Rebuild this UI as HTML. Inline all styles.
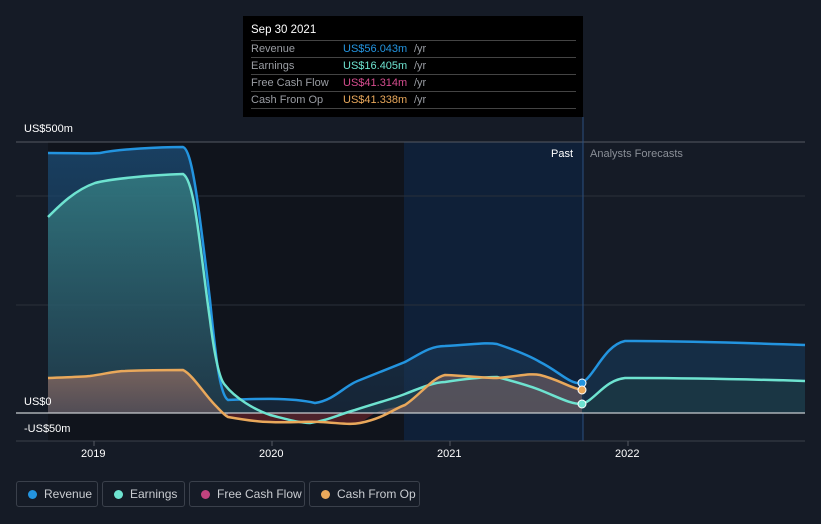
<!DOCTYPE html><html><head><style>
body{margin:0;width:821px;height:524px;background:#151b26;font-family:"Liberation Sans",sans-serif;overflow:hidden;position:relative}
.t{position:absolute;font-size:11px;color:#fff}
.leg{position:absolute;top:481px;height:26px;border:1px solid #3a404b;border-radius:3px;box-sizing:border-box;color:#c9ccd1;font-size:12px;line-height:24px;padding-left:27px}
.leg i{position:absolute;left:11px;top:8px;width:9px;height:9px;border-radius:50%}
.tip{position:absolute;left:243px;top:16px;width:340px;height:101px;background:#000}
.row{position:absolute;left:8px;width:325px;border-top:1px solid #444;font-size:11px;color:#9a9da3;height:17px;line-height:17px}
.row b{font-weight:normal;position:absolute;left:92px}
.row s{text-decoration:none;position:absolute;left:163px;color:#9a9da3}
</style></head><body>
<svg width="821" height="524" style="position:absolute;left:0;top:0">
<defs>
<linearGradient id="gr" x1="0" y1="0" x2="0" y2="1"><stop offset="0" stop-color="#1b4a72" stop-opacity=".8"/><stop offset="1" stop-color="#1b3550" stop-opacity=".5"/></linearGradient>
<linearGradient id="ge" x1="0" y1="0" x2="0" y2="1"><stop offset="0" stop-color="#3a8a8a" stop-opacity=".7"/><stop offset="1" stop-color="#234050" stop-opacity=".6"/></linearGradient>
<linearGradient id="gc" x1="0" y1="0" x2="0" y2="1"><stop offset="0" stop-color="#8a6a60" stop-opacity=".8"/><stop offset="1" stop-color="#5a5058" stop-opacity=".8"/></linearGradient>
</defs>
<rect x="48" y="142" width="356" height="299" fill="#10141c"/>
<rect x="404" y="142" width="179" height="299" fill="#0f2038"/>
<g stroke="#2a303a" stroke-width="1"><line x1="16" y1="196" x2="805" y2="196"/><line x1="16" y1="305" x2="805" y2="305"/></g>
<line x1="16" y1="142" x2="805" y2="142" stroke="#555a63"/>
<line x1="583" y1="117" x2="583" y2="441" stroke="#2b4f80"/>
<path d="M48,153 C80,153 90,154 100,153 C120,149 160,147 183,147 C192,150 198,200 210,300 C216,360 220,395 228,400 C250,399 290,397 315,403 C335,400 345,385 360,380 C380,372 395,366 405,362 C420,354 430,346 445,346 C470,345 485,342 497,344 C515,350 530,356 540,362 C560,372 570,385 582,383 L582,413 L48,413Z" fill="url(#gr)"/>
<path d="M48,217 C60,205 75,190 95,183 C110,179 150,175 183,174 C195,180 200,250 210,320 C215,360 220,380 225,385 C235,398 255,410 270,415 C290,420 300,423 310,423 C330,420 340,414 355,410 C380,402 395,398 405,394 C420,388 435,382 445,382 C470,378 485,377 497,377 C520,383 535,388 540,390 C560,398 570,404 582,404 L582,413 L48,413Z" fill="url(#ge)"/>
<path d="M48,378 C70,377 80,377 90,376 C105,374 115,371 125,371 C150,370 170,370 183,370 C192,374 205,395 215,405 C220,410 224,415 228,417 L228,413 L48,413Z" fill="url(#gc)"/>
<path d="M228,413 L228,417 C245,420 260,422 270,422 C290,423 310,421 320,422 C340,423 350,425 360,423 L375,413Z" fill="#5a2028" opacity=".8"/>
<path d="M375,413 C385,408 395,408 405,405 C420,395 432,378 445,375 C470,376 485,378 497,378 C520,376 530,373 540,375 C560,380 570,388 582,390 L582,413Z" fill="#6a5a60" opacity=".7"/>
<path d="M582,383 C595,375 605,345 625,341 C660,341 720,342 805,345 L805,413 L582,413Z" fill="#15324d" opacity=".8"/>
<path d="M582,404 C595,400 605,380 625,378 C680,378 740,379 805,381 L805,413 L582,413Z" fill="#1c3a44" opacity=".7"/>
<line x1="16" y1="413" x2="805" y2="413" stroke="#c8ccd0" stroke-width="1.2"/>
<line x1="16" y1="441" x2="805" y2="441" stroke="#3a404b"/>
<g stroke="#555a63"><line x1="94" y1="441" x2="94" y2="446"/><line x1="272" y1="441" x2="272" y2="446"/><line x1="450" y1="441" x2="450" y2="446"/><line x1="628" y1="441" x2="628" y2="446"/></g>
<g fill="none" stroke-width="2.5">
<path d="M48,153 C80,153 90,154 100,153 C120,149 160,147 183,147 C192,150 198,200 210,300 C216,360 220,395 228,400 C250,399 290,397 315,403 C335,400 345,385 360,380 C380,372 395,366 405,362 C420,354 430,346 445,346 C470,345 485,342 497,344 C515,350 530,356 540,362 C560,372 570,385 582,383 C595,375 605,345 625,341 C660,341 720,342 805,345" stroke="#2394df"/>
<path d="M48,217 C60,205 75,190 95,183 C110,179 150,175 183,174 C195,180 200,250 210,320 C215,360 220,380 225,385 C235,398 255,410 270,415 C290,420 300,423 310,423 C330,420 340,414 355,410 C380,402 395,398 405,394 C420,388 435,382 445,382 C470,378 485,377 497,377 C520,383 535,388 540,390 C560,398 570,404 582,404 C595,400 605,380 625,378 C680,378 740,379 805,381" stroke="#6ee3d0"/>
<path d="M48,378 C70,377 80,377 90,376 C105,374 115,371 125,371 C150,370 170,370 183,370 C192,374 205,395 215,405 C220,410 224,415 228,417 C245,420 260,422 270,422 C290,423 310,421 320,422 C340,423 350,425 360,423 C385,418 395,408 405,405 C420,395 432,378 445,375 C470,376 485,378 497,378 C520,376 530,373 540,375 C560,380 570,388 582,390" stroke="#e9a85b"/>
</g>
<circle cx="582" cy="383" r="4" fill="#2394df" stroke="#fff" stroke-width="1"/>
<circle cx="582" cy="404" r="4" fill="#6ee3d0" stroke="#fff" stroke-width="1"/>
<circle cx="582" cy="390" r="4" fill="#e9a85b" stroke="#fff" stroke-width="1"/>
</svg>
<div class="t" style="left:24px;top:123px">US$500m</div>
<div class="t" style="left:24px;top:396px">US$0</div>
<div class="t" style="left:24px;top:423px">-US$50m</div>
<div class="t" style="left:551px;top:148px">Past</div>
<div class="t" style="left:590px;top:148px;color:#8a8f97">Analysts Forecasts</div>
<div class="t" style="left:81px;top:448px">2019</div>
<div class="t" style="left:259px;top:448px">2020</div>
<div class="t" style="left:437px;top:448px">2021</div>
<div class="t" style="left:615px;top:448px">2022</div>
<div class="tip">
<div class="t" style="left:8px;top:8px;font-size:11.5px">Sep 30 2021</div>
<div class="row" style="top:24px">Revenue<b style="color:#2394df">US$56.043m</b><s>/yr</s></div>
<div class="row" style="top:41px">Earnings<b style="color:#6ee3d0">US$16.405m</b><s>/yr</s></div>
<div class="row" style="top:58px">Free Cash Flow<b style="color:#d64d8f">US$41.314m</b><s>/yr</s></div>
<div class="row" style="top:75px">Cash From Op<b style="color:#e9a85b">US$41.338m</b><s>/yr</s></div>
<div style="position:absolute;left:8px;top:92px;width:325px;border-top:1px solid #444"></div>
</div>
<div class="leg" style="left:16px;width:82px"><i style="background:#2394df"></i>Revenue</div>
<div class="leg" style="left:102px;width:83px"><i style="background:#6ee3d0"></i>Earnings</div>
<div class="leg" style="left:189px;width:116px"><i style="background:#c2437f"></i>Free Cash Flow</div>
<div class="leg" style="left:309px;width:111px"><i style="background:#e9a85b"></i>Cash From Op</div>
</body></html>
